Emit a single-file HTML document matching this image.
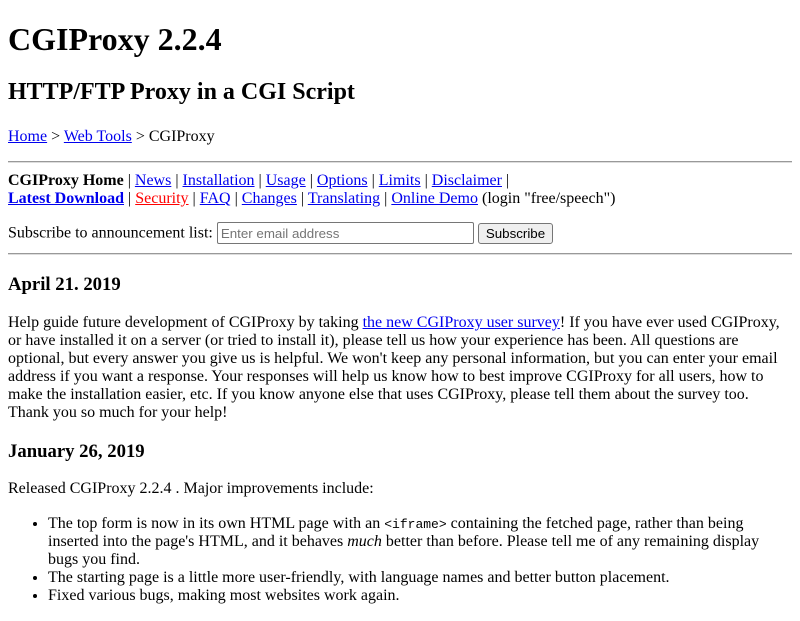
<!DOCTYPE html>
<html><head><meta charset="utf-8"><style>
body{margin:8px;font-family:"Liberation Serif",serif;font-size:16px;color:#000;background:#fff}
a{color:#00e}
h1{font-size:32px;margin:21px 0}
h2{font-size:24px;margin:20px 0 22px}
h3{font-size:18.72px;margin:19px 0 18px}
hr{border:0;border-top:1px solid #999;border-bottom:1px solid #ddd;margin:8px 0 9px}
p{margin:16px 0}
ul{margin:17px 0 16px;padding-left:40px}
input[type=text]{font-family:"Liberation Sans",sans-serif;font-size:13.33px;width:249px;padding:1px 3px;border:1px solid #767676;border-radius:2px;height:18px;box-sizing:content-box}
button{font-family:"Liberation Sans",sans-serif;font-size:13.33px;padding:1px 7px;border:1px solid #767676;border-radius:3px;background:#efefef;height:21px}
code{font-family:"Liberation Mono",monospace;font-size:13px}
</style></head><body>
<h1>CGIProxy 2.2.4</h1>
<h2>HTTP/FTP Proxy in a CGI Script</h2>
<p style="margin-bottom:15px"><a href="#">Home</a> &gt; <a href="#">Web Tools</a> &gt; CGIProxy</p>
<hr>
<div><b>CGIProxy Home</b> | <a href="#">News</a> | <a href="#">Installation</a> | <a href="#">Usage</a> | <a href="#">Options</a> | <a href="#">Limits</a> | <a href="#">Disclaimer</a> |<br>
<b><a href="#">Latest Download</a></b> | <a href="#" style="color:#f00">Security</a> | <a href="#">FAQ</a> | <a href="#">Changes</a> | <a href="#">Translating</a> | <a href="#">Online Demo</a> (login "free/speech")</div>
<p style="margin:14px 0 9px">Subscribe to announcement list: <input type="text" placeholder="Enter email address"> <button>Subscribe</button></p>
<hr>
<h3>April 21. 2019</h3>
<p>Help guide future development of CGIProxy by taking <a href="#">the new CGIProxy user survey</a>! If you have ever used CGIProxy, or have installed it on a server (or tried to install it), please tell us how your experience has been. All questions are optional, but every answer you give us is helpful. We won't keep any personal information, but you can enter your email address if you want a response. Your responses will help us know how to best improve CGIProxy for all users, how to make the installation easier, etc. If you know anyone else that uses CGIProxy, please tell them about the survey too. Thank you so much for your help!</p>
<h3 style="margin-bottom:17px">January 26, 2019</h3>
<p>Released CGIProxy 2.2.4 . Major improvements include:</p>
<ul>
<li>The top form is now in its own HTML page with an <code>&lt;iframe&gt;</code> containing the fetched page, rather than being inserted into the page's HTML, and it behaves <i>much</i> better than before. Please tell me of any remaining display bugs you find.</li>
<li>The starting page is a little more user-friendly, with language names and better button placement.</li>
<li>Fixed various bugs, making most websites work again.</li>
</ul>
</body></html>
